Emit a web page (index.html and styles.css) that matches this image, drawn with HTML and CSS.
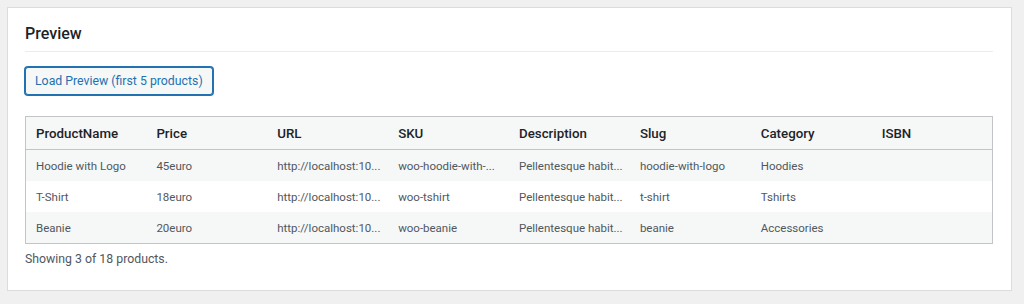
FILE: index.html
```html
<!DOCTYPE html>
<html>
<head>
<meta charset="utf-8">
<link rel="stylesheet" href="styles.css">
</head>
<body>
<div class="card">
  <h2 class="title">Preview</h2>
  <button class="btn">Load Preview (first 5 products)</button>
  <table class="grid">
    <thead>
      <tr><th>ProductName</th><th>Price</th><th>URL</th><th>SKU</th><th>Description</th><th>Slug</th><th>Category</th><th>ISBN</th></tr>
    </thead>
    <tbody>
      <tr><td>Hoodie with Logo</td><td>45euro</td><td>http://localhost:10...</td><td>woo-hoodie-with-...</td><td>Pellentesque habit...</td><td>hoodie-with-logo</td><td>Hoodies</td><td></td></tr>
      <tr><td>T-Shirt</td><td>18euro</td><td>http://localhost:10...</td><td>woo-tshirt</td><td>Pellentesque habit...</td><td>t-shirt</td><td>Tshirts</td><td></td></tr>
      <tr><td>Beanie</td><td>20euro</td><td>http://localhost:10...</td><td>woo-beanie</td><td>Pellentesque habit...</td><td>beanie</td><td>Accessories</td><td></td></tr>
    </tbody>
  </table>
  <p class="note">Showing 3 of 18 products.</p>
</div>
</body>
</html>
```
FILE: styles.css
```css
html, body { margin: 0; padding: 0; }
body {
  background: #f0f0f1;
  padding: 7px 12px 0 7px;
  font-family: Roboto, "Liberation Sans", Arial, sans-serif;
  color: #3c434a;
}
.card {
  box-sizing: border-box;
  height: 284px;
  background: #fff;
  border: 1px solid #dcdcde;
  padding: 14px 18px 0 17px;
}
.title {
  margin: 0;
  font-size: 16px;
  line-height: 24px;
  font-weight: 500;
  color: #1d2327;
  padding-bottom: 5px;
  border-bottom: 1px solid #ececed;
}
.btn {
  display: block;
  margin-top: 15px;
  height: 28px;
  padding: 0 9px;
  font-family: inherit;
  font-size: 12.3px;
  color: #2271b1;
  background: #f6f7f7;
  border: 1px solid #2271b1;
  border-radius: 3px;
  box-shadow: 0 0 0 1px #2271b1;
}
.grid {
  margin-top: 21px;
  width: 100%;
  table-layout: fixed;
  border-collapse: collapse;
  border: 1px solid #c3c4c7;
  font-size: 11.5px;
}
.grid th {
  text-align: left;
  font-weight: 500;
  font-size: 13.3px;
  color: #1d2327;
  height: 32px;
  padding: 0 8px 0 10px;
  background: #f6f7f7;
  border-bottom: 1px solid #c3c4c7;
}
.grid td {
  height: 31px;
  padding: 0 6px 0 10px;
  color: #50575e;
  white-space: nowrap;
  overflow: hidden;
  text-overflow: ellipsis;
}
.grid tbody tr:nth-child(odd) td { background: #f6f7f7; }
.note {
  margin: 6px 0 0;
  font-size: 12.3px;
  line-height: 18px;
  color: #50575e;
}
```
